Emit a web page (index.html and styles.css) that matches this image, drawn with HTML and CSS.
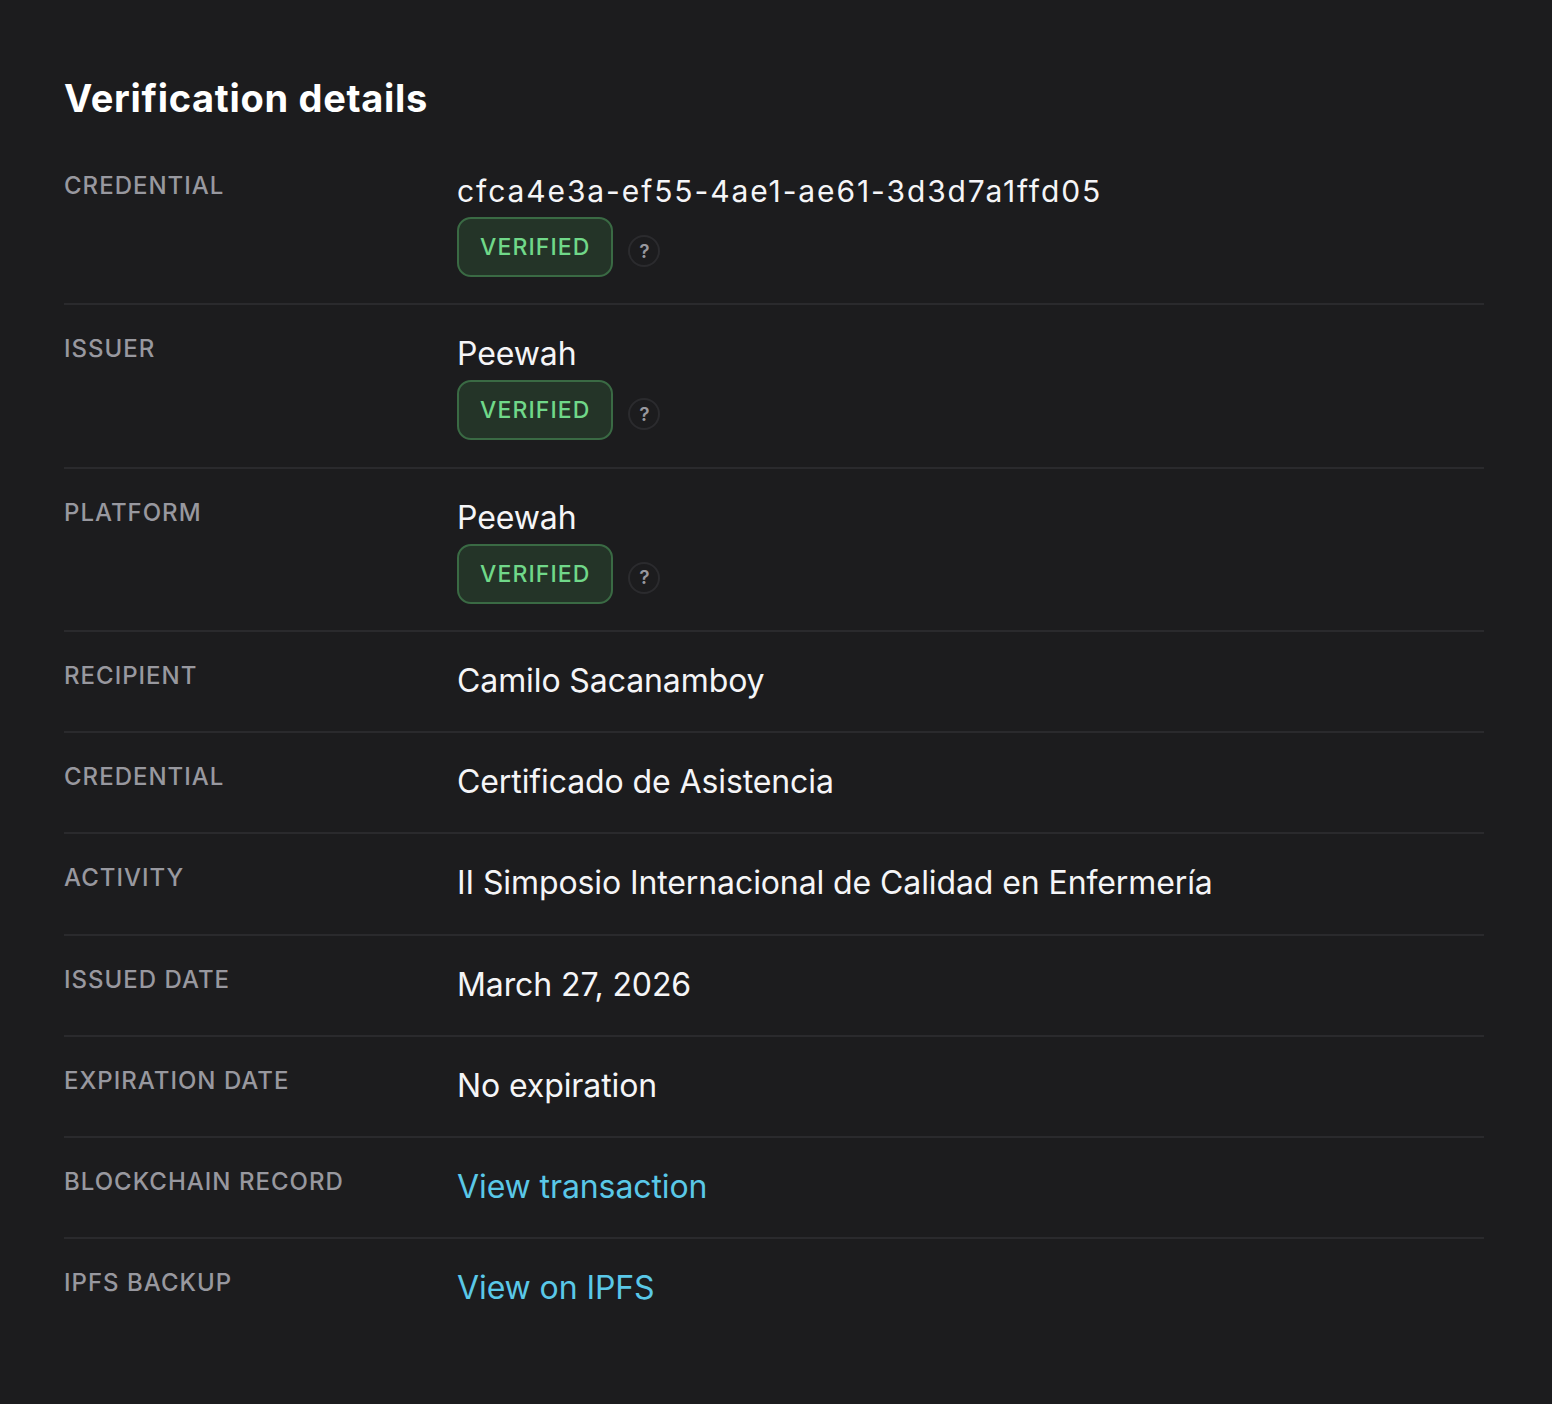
FILE: index.html
```html
<!DOCTYPE html>
<html lang="en">
<head>
<meta charset="utf-8">
<title>Verification details</title>
<link rel="stylesheet" href="styles.css">
</head>
<body>
<main class="page">
  <h1 class="title">Verification details</h1>
  <dl class="details">
    <div class="row">
      <dt class="label">Credential</dt>
      <dd class="value">
        <div class="hash">cfca4e3a-ef55-4ae1-ae61-3d3d7a1ffd05</div>
        <div class="status"><span class="badge">VERIFIED</span><span class="help">?</span></div>
      </dd>
    </div>
    <div class="row">
      <dt class="label">Issuer</dt>
      <dd class="value">
        <div class="text">Peewah</div>
        <div class="status"><span class="badge">VERIFIED</span><span class="help">?</span></div>
      </dd>
    </div>
    <div class="row">
      <dt class="label">Platform</dt>
      <dd class="value">
        <div class="text">Peewah</div>
        <div class="status"><span class="badge">VERIFIED</span><span class="help">?</span></div>
      </dd>
    </div>
    <div class="row">
      <dt class="label">Recipient</dt>
      <dd class="value"><div class="text">Camilo Sacanamboy</div></dd>
    </div>
    <div class="row">
      <dt class="label">Credential</dt>
      <dd class="value"><div class="text">Certificado de Asistencia</div></dd>
    </div>
    <div class="row">
      <dt class="label">Activity</dt>
      <dd class="value"><div class="text">II Simposio Internacional de Calidad en Enfermería</div></dd>
    </div>
    <div class="row">
      <dt class="label">Issued date</dt>
      <dd class="value"><div class="text">March 27, 2026</div></dd>
    </div>
    <div class="row">
      <dt class="label">Expiration date</dt>
      <dd class="value"><div class="text">No expiration</div></dd>
    </div>
    <div class="row">
      <dt class="label">Blockchain record</dt>
      <dd class="value"><a class="link" href="#">View transaction</a></dd>
    </div>
    <div class="row">
      <dt class="label">IPFS backup</dt>
      <dd class="value"><a class="link" href="#">View on IPFS</a></dd>
    </div>
  </dl>
</main>
</body>
</html>
```
FILE: styles.css
```css
html, body {
  margin: 0;
  padding: 0;
  background: #1c1c1e;
}
body {
  font-family: Inter, "Noto Sans", sans-serif;
  color: #f5f5f7;
}
.page {
  padding: 76px 68px 64px 64px;
}
.title {
  margin: 0 0 22px 0;
  font-size: 38px;
  line-height: 44px;
  font-weight: 700;
  letter-spacing: 0.7px;
  color: #ffffff;
}
.details {
  margin: 0;
}
.row {
  display: grid;
  grid-template-columns: 393px 1fr;
  padding: 25px 0 26.25px 0;
  border-bottom: 2px solid #2a2a2d;
}
.row:last-child {
  border-bottom: none;
}
.label {
  margin: 0;
  font-size: 24px;
  line-height: 38px;
  font-weight: 500;
  letter-spacing: 1px;
  text-transform: uppercase;
  color: #98989f;
}
.value {
  margin: 0;
}
.text, .hash, .link {
  display: block;
  font-size: 32px;
  line-height: 48px;
  font-weight: 400;
  letter-spacing: -0.1px;
  color: #f5f5f7;
}
.hash {
  font-size: 30px;
  letter-spacing: 1.9px;
}
.link {
  color: #5ac8e8;
  text-decoration: none;
}
.status {
  display: flex;
  align-items: center;
  margin-top: 2px;
}
.badge {
  box-sizing: border-box;
  height: 60px;
  display: inline-flex;
  align-items: center;
  padding: 0 21px;
  border: 2px solid #3a6a44;
  border-radius: 14px;
  background: #243428;
  color: #70d889;
  font-size: 23px;
  font-weight: 500;
  letter-spacing: 1.1px;
}
.help {
  box-sizing: border-box;
  width: 32px;
  height: 32px;
  margin: 8px 0 0 15px;
  border: 2px solid #2b2b2e;
  border-radius: 50%;
  display: inline-flex;
  align-items: center;
  justify-content: center;
  font-size: 19px;
  font-weight: 600;
  color: #98989f;
}
```
